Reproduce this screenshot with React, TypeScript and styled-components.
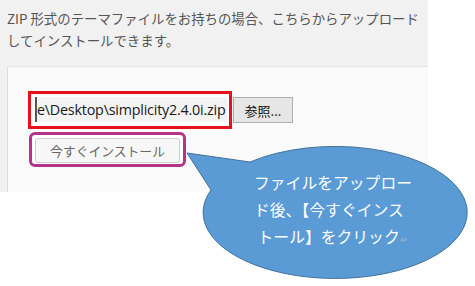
import React from 'react'
import styled, { createGlobalStyle } from 'styled-components'

const GlobalStyle = createGlobalStyle`
    body {
        margin: 0;
        background: #ffffff;
        font-family: "Noto Sans CJK JP", "Noto Sans", sans-serif;
    }
`

const Page = styled.div`
    position: relative;
    width: 475px;
    height: 286px;
    overflow: hidden;
    background: #ffffff;
`

const Section = styled.div`
    width: 428px;
    height: 192px;
    box-sizing: border-box;
    padding: 7px 0 0 7px;
    background: #f1f1f1;
    display: flex;
    flex-direction: column;
`

const Description = styled.p`
    margin: 0;
    font-size: 13.4px;
    line-height: 22px;
    color: #555555;
    white-space: nowrap;
`

const Panel = styled.div`
    flex: 1;
    margin-top: 15px;
    padding: 24px 0 0 20px;
    background: #fafafa;
    border-left: 1px solid #dcdcdc;
    border-top: 1px solid #e6e6e6;
`

const UploadRow = styled.div`
    display: flex;
    align-items: center;
    gap: 1px;
`

const RedFrame = styled.div`
    width: 204px;
    height: 38px;
    box-sizing: border-box;
    border: 3px solid #e8101c;
    padding: 3px 2px 4px 4px;
    background: #ffffff;
`

const FileField = styled.div`
    height: 100%;
    box-sizing: border-box;
    border-left: 2px solid #555555;
    background: #f3f3f3;
    font-family: "Open Sans", "Liberation Sans", sans-serif;
    font-size: 14.3px;
    line-height: 25px;
    color: #1a1a1a;
    white-space: nowrap;
    overflow: hidden;
    letter-spacing: -0.2px;
`

const BrowseButton = styled.button`
    width: 60px;
    height: 26px;
    padding: 0;
    background: #e6e6e6;
    border: 1px solid #adadad;
    border-radius: 0;
    font-family: "Noto Sans CJK JP", sans-serif;
    font-size: 13px;
    color: #111111;
`

const InstallFrame = styled.div`
    width: 157px;
    height: 35px;
    box-sizing: border-box;
    margin: 3px 0 0 1px;
    padding: 2px 3px;
    border: 3px solid #b4348c;
    border-radius: 6px;
    background: #ffffff;
`

const InstallButton = styled.button`
    width: 100%;
    height: 100%;
    padding: 0;
    background: #f7f7f7;
    border: 1px solid #cccccc;
    border-radius: 3px;
    font-family: "Noto Sans CJK JP", sans-serif;
    font-size: 12.8px;
    color: #666666;
`

const Callout = styled.div`
    position: absolute;
    left: 185px;
    top: 145px;
    width: 290px;
    height: 141px;
`

const CalloutText = styled.div`
    position: absolute;
    left: 69px;
    top: 24px;
    width: 175px;
    font-family: "Noto Sans CJK JP", sans-serif;
    font-size: 15.8px;
    line-height: 27px;
    color: #ffffff;
    white-space: nowrap;
`

const ReturnMark = styled.span`
    font-size: 9px;
    color: #9fb7cf;
`

export default function App() {
    return (
        <Page>
            <GlobalStyle />
            <Section>
                <Description>
                    ZIP 形式のテーマファイルをお持ちの場合、こちらからアップロード
                    <br />
                    してインストールできます。
                </Description>
                <Panel>
                    <UploadRow>
                        <RedFrame>
                            <FileField>e\Desktop\simplicity2.4.0i.zip</FileField>
                        </RedFrame>
                        <BrowseButton>参照...</BrowseButton>
                    </UploadRow>
                    <InstallFrame>
                        <InstallButton>今すぐインストール</InstallButton>
                    </InstallFrame>
                </Panel>
            </Section>
            <Callout>
                <svg width="290" height="141" viewBox="0 0 290 141">
                    <path
                        d="M65 17 L2 8 L26 45 A132 66 0 1 0 65 17 Z"
                        fill="#5b9bd5"
                        stroke="#41719c"
                        strokeWidth="1"
                    />
                </svg>
                <CalloutText>
                    ファイルをアップロー
                    <br />
                    ド後、【今すぐインス
                    <br />
                    &nbsp;トール】をクリック<ReturnMark>↵</ReturnMark>
                </CalloutText>
            </Callout>
        </Page>
    )
}
